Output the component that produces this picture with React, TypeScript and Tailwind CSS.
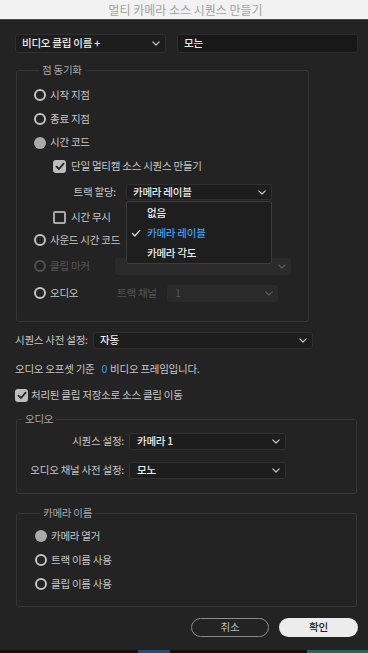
import React from "react";

function Chevron({ dim = false }: { dim?: boolean }) {
  return (
    <svg width="8" height="5" viewBox="0 0 8 5" className="shrink-0">
      <path d="M0.8 0.8 L4 4 L7.2 0.8" fill="none" stroke={dim ? "#5a5a5a" : "#c4c4c4"} strokeWidth="1.2" strokeLinecap="round" strokeLinejoin="round" />
    </svg>
  );
}

function Radio({ checked = false, disabled = false }: { checked?: boolean; disabled?: boolean }) {
  if (checked) {
    return <span className="h-[12px] w-[12px] shrink-0 rounded-full bg-[#a9a9a9]" />;
  }
  return (
    <span
      className={
        disabled
          ? "h-[12px] w-[12px] shrink-0 rounded-full border-2 border-[#4f4f4f]"
          : "h-[12px] w-[12px] shrink-0 rounded-full border-2 border-[#c2c2c2]"
      }
    />
  );
}

function Checkbox({ checked = false }: { checked?: boolean }) {
  if (!checked) {
    return <span className="h-[13px] w-[13px] shrink-0 rounded-[2px] border-2 border-[#a8a8a8]" />;
  }
  return (
    <span className="flex h-[13px] w-[13px] shrink-0 items-center justify-center rounded-[3px] bg-[#bdbdbd]">
      <svg width="10" height="9" viewBox="0 0 10 9">
        <path d="M1.5 4.6 L4 7 L8.6 1.6" fill="none" stroke="#262626" strokeWidth="1.8" strokeLinecap="round" strokeLinejoin="round" />
      </svg>
    </span>
  );
}

export default function App() {
  return (
    <div className="flex h-[653px] w-[368px] flex-col overflow-hidden bg-[#232323] font-['Noto_Sans_CJK_KR',sans-serif] text-[10.5px] leading-none tracking-[-0.25px] text-[#c6c6c6]">
      {/* title bar */}
      <div className="flex h-[20px] shrink-0 items-center justify-center border-b border-[#4a4a4a] bg-[#f2f2f2] pl-[3px] text-[12px] tracking-normal text-[#a3a3a3]">
        멀티 카메라 소스 시퀀스 만들기
      </div>

      <div className="flex flex-1 flex-col pl-[15px] pr-[10px]">
        {/* top row */}
        <div className="mt-[14px] flex h-[19px] gap-[11px]">
          <div className="flex w-[151px] items-center justify-between rounded-[3px] border border-[#2f2f2f] bg-[#1d1d1d] pl-[6px] pr-[5px]">
            <span className="font-medium text-[#ececec]">비디오 클립 이름 +</span>
            <Chevron />
          </div>
          <div className="flex flex-1 items-center rounded-[3px] border border-[#2c2c2c] bg-[#181818] pl-[6px] font-medium text-[#ececec]">
            모는
          </div>
        </div>

        {/* 점 동기화 */}
        <fieldset className="ml-[1px] mr-[1px] mt-[10px] w-[293px] rounded-[3px] border border-[#363636] pb-[15px] pl-[17px] pt-[6px]">
          <legend className="ml-[5px] px-[3px] leading-[14px] text-[#a9a9a9]">점 동기화</legend>
          <div className="flex h-[24px] items-center gap-[4px]">
            <Radio />
            <span>시작 지점</span>
          </div>
          <div className="flex h-[24px] items-center gap-[4px]">
            <Radio />
            <span>종료 지점</span>
          </div>
          <div className="flex h-[23px] items-center gap-[4px]">
            <Radio checked />
            <span>시간 코드</span>
          </div>
          <div className="ml-[19px] flex h-[24px] items-center gap-[5px]">
            <Checkbox checked />
            <span>단일 멀티캠 소스 시퀀스 만들기</span>
          </div>
          <div className="flex h-[28px] items-center gap-[10px]">
            <span className="w-[82px] text-right">트랙 할당:</span>
            <div className="relative h-[16px] w-[146px]">
              <div className="flex h-full items-center justify-between rounded-[3px] border border-[#2f2f2f] bg-[#1d1d1d] pl-[6px] pr-[5px]">
                <span className="font-medium text-[#ececec]">카메라 레이블</span>
                <Chevron />
              </div>
              <div className="absolute left-0 top-[17px] z-10 flex h-[63px] w-[146px] flex-col rounded-[2px] border border-[#3c3c3c] bg-[#1e1e1e] pt-[1px] text-[#ececec]">
                <div className="flex h-[20px] items-center pl-[20px] font-medium">없음</div>
                <div className="flex h-[21px] items-center text-[#3d9cec]">
                  <svg width="20" height="9" viewBox="0 0 20 9" className="shrink-0">
                    <path d="M5.5 4.6 L7.8 7 L12.6 1.6" fill="none" stroke="#d6d6d6" strokeWidth="1.4" strokeLinecap="round" strokeLinejoin="round" />
                  </svg>
                  <span className="font-medium">카메라 레이블</span>
                </div>
                <div className="flex h-[20px] items-center pl-[20px] font-medium">카메라 각도</div>
              </div>
            </div>
          </div>
          <div className="ml-[19px] flex h-[22px] items-center gap-[5px]">
            <Checkbox />
            <span>시간 무시</span>
          </div>
          <div className="flex h-[24px] items-center gap-[4px]">
            <Radio />
            <span>사운드 시간 코드</span>
          </div>
          <div className="flex h-[28px] items-center">
            <div className="flex w-[81px] items-center gap-[4px] text-[#555555]">
              <Radio disabled />
              <span>클립 마커</span>
            </div>
            <div className="flex h-[17px] w-[176px] items-center justify-end rounded-[3px] bg-[#2a2a2a] pr-[5px]">
              <Chevron dim />
            </div>
          </div>
          <div className="flex h-[26px] items-center">
            <div className="flex w-[83px] items-center gap-[4px]">
              <Radio />
              <span>오디오</span>
            </div>
            <span className="w-[50px] text-[#555555]">트랙 채널</span>
            <div className="flex h-[17px] w-[111px] items-center justify-between rounded-[3px] bg-[#2a2a2a] pl-[8px] pr-[5px] text-[#555555]">
              <span>1</span>
              <Chevron dim />
            </div>
          </div>
        </fieldset>

        {/* 시퀀스 사전 설정 */}
        <div className="mt-[10px] flex h-[17px] items-center">
          <span className="w-[78px]">시퀀스 사전 설정:</span>
          <div className="flex h-full w-[220px] items-center justify-between rounded-[3px] border border-[#2f2f2f] bg-[#1d1d1d] pl-[6px] pr-[5px]">
            <span className="font-medium text-[#ececec]">자동</span>
            <Chevron />
          </div>
        </div>

        <div className="mt-[12px] flex h-[16px] items-center">
          <span>오디오 오프셋 기준</span>
          <span className="ml-[7px] mr-[3px] text-[#3d9cec]">0</span>
          <span>비디오 프레임입니다.</span>
        </div>

        <div className="mt-[10px] flex h-[16px] items-center gap-[3px]">
          <Checkbox checked />
          <span>처리된 클립 저장소로 소스 클립 이동</span>
        </div>

        {/* 오디오 */}
        <fieldset className="ml-[1px] mr-[1px] mt-[9px] rounded-[3px] border border-[#363636] pb-[14px] pt-[7px]">
          <legend className="ml-[5px] px-[3px] leading-[14px] text-[#a9a9a9]">오디오</legend>
          <div className="flex h-[17px] items-center gap-[5px]">
            <span className="w-[107px] text-right">시퀀스 설정:</span>
            <div className="flex h-full w-[157px] items-center justify-between rounded-[3px] border border-[#2f2f2f] bg-[#1d1d1d] pl-[7px] pr-[5px]">
              <span className="font-medium text-[#ececec]">카메라 1</span>
              <Chevron />
            </div>
          </div>
          <div className="mt-[12px] flex h-[17px] items-center gap-[5px]">
            <span className="w-[107px] text-right">오디오 채널 사전 설정:</span>
            <div className="flex h-full w-[157px] items-center justify-between rounded-[3px] border border-[#2f2f2f] bg-[#1d1d1d] pl-[7px] pr-[5px]">
              <span className="font-medium text-[#ececec]">모노</span>
              <Chevron />
            </div>
          </div>
        </fieldset>

        {/* 카메라 이름 */}
        <fieldset className="ml-[1px] mr-[1px] mt-[12px] rounded-[3px] border border-[#363636] pb-[10px] pl-[18px] pt-[4px]">
          <legend className="ml-[5px] px-[3px] leading-[14px] text-[#a9a9a9]">카메라 이름</legend>
          <div className="flex h-[24px] items-center gap-[4px]">
            <Radio checked />
            <span>카메라 열거</span>
          </div>
          <div className="flex h-[24px] items-center gap-[4px]">
            <Radio />
            <span>트랙 이름 사용</span>
          </div>
          <div className="flex h-[24px] items-center gap-[4px]">
            <Radio />
            <span>클립 이름 사용</span>
          </div>
        </fieldset>

        {/* buttons */}
        <div className="mt-[11px] flex h-[19px] justify-end gap-[10px]">
          <button className="flex w-[78px] items-center justify-center rounded-full border border-[#8c8c8c] text-[#bdbdbd]">
            취소
          </button>
          <button className="flex w-[79px] items-center justify-center rounded-full bg-[#ececec] font-medium text-[#202020]">
            확인
          </button>
        </div>
      </div>

      {/* desktop strip */}
      <div className="flex h-[3px] shrink-0 bg-[#111111]">
        <div className="ml-[138px] w-[32px] bg-[#1d4f7a]" />
        <div className="ml-[137px] flex-1 bg-[#136b5c]" />
      </div>
    </div>
  );
}
